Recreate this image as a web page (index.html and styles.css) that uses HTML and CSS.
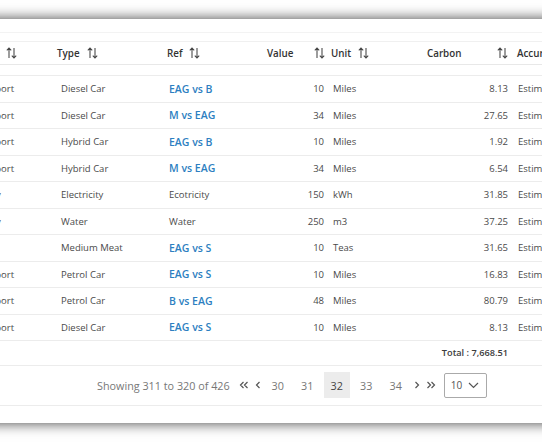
FILE: index.html
```html
<!DOCTYPE html>
<html>
<head>
<meta charset="utf-8">
<link rel="stylesheet" href="styles.css">
</head>
<body>
<div class="panel">
  <div class="toolbar"></div>
  <div class="gap"></div>
  <div class="grid head">
    <div class="hc h1"><span>Scope</span><svg class="sort" viewBox="0 0 11 12"><path d="M3 11V1M0.8 3.4L3 1L5.2 3.4M8 1V11M5.8 8.6L8 11L10.2 8.6"/></svg></div>
    <div class="hc h2"><span>Type</span><svg class="sort" viewBox="0 0 11 12"><path d="M3 11V1M0.8 3.4L3 1L5.2 3.4M8 1V11M5.8 8.6L8 11L10.2 8.6"/></svg></div>
    <div class="hc h3"><span>Ref</span><svg class="sort" viewBox="0 0 11 12"><path d="M3 11V1M0.8 3.4L3 1L5.2 3.4M8 1V11M5.8 8.6L8 11L10.2 8.6"/></svg></div>
    <div class="hc num h4"><span>Value</span><svg class="sort" viewBox="0 0 11 12"><path d="M3 11V1M0.8 3.4L3 1L5.2 3.4M8 1V11M5.8 8.6L8 11L10.2 8.6"/></svg></div>
    <div class="hc h5"><span>Unit</span><svg class="sort" viewBox="0 0 11 12"><path d="M3 11V1M0.8 3.4L3 1L5.2 3.4M8 1V11M5.8 8.6L8 11L10.2 8.6"/></svg></div>
    <div class="hc num h6"><span>Carbon</span><svg class="sort" viewBox="0 0 11 12"><path d="M3 11V1M0.8 3.4L3 1L5.2 3.4M8 1V11M5.8 8.6L8 11L10.2 8.6"/></svg></div>
    <div class="hc h7"><span>Accuracy</span></div>
  </div>
  <div class="spacer"></div>

  <div class="grid row"><div class="c d1">Transport</div><div class="c d2">Diesel Car</div><div class="c d3"><a>EAG vs B</a></div><div class="c n">10</div><div class="c d5">Miles</div><div class="c n">8.13</div><div class="c d7">Estimated</div></div>
  <div class="grid row"><div class="c d1">Transport</div><div class="c d2">Diesel Car</div><div class="c d3"><a>M vs EAG</a></div><div class="c n">34</div><div class="c d5">Miles</div><div class="c n">27.65</div><div class="c d7">Estimated</div></div>
  <div class="grid row"><div class="c d1">Transport</div><div class="c d2">Hybrid Car</div><div class="c d3"><a>EAG vs B</a></div><div class="c n">10</div><div class="c d5">Miles</div><div class="c n">1.92</div><div class="c d7">Estimated</div></div>
  <div class="grid row"><div class="c d1">Transport</div><div class="c d2">Hybrid Car</div><div class="c d3"><a>M vs EAG</a></div><div class="c n">34</div><div class="c d5">Miles</div><div class="c n">6.54</div><div class="c d7">Estimated</div></div>
  <div class="grid row"><div class="c d1">Energy</div><div class="c d2">Electricity</div><div class="c d3">Ecotricity</div><div class="c n">150</div><div class="c d5">kWh</div><div class="c n">31.85</div><div class="c d7">Estimated</div></div>
  <div class="grid row"><div class="c d1">Energy</div><div class="c d2">Water</div><div class="c d3">Water</div><div class="c n">250</div><div class="c d5">m3</div><div class="c n">37.25</div><div class="c d7">Estimated</div></div>
  <div class="grid row"><div class="c d1">Food</div><div class="c d2">Medium Meat</div><div class="c d3"><a>EAG vs S</a></div><div class="c n">10</div><div class="c d5">Teas</div><div class="c n">31.65</div><div class="c d7">Estimated</div></div>
  <div class="grid row"><div class="c d1">Transport</div><div class="c d2">Petrol Car</div><div class="c d3"><a>EAG vs S</a></div><div class="c n">10</div><div class="c d5">Miles</div><div class="c n">16.83</div><div class="c d7">Estimated</div></div>
  <div class="grid row"><div class="c d1">Transport</div><div class="c d2">Petrol Car</div><div class="c d3"><a>B vs EAG</a></div><div class="c n">48</div><div class="c d5">Miles</div><div class="c n">80.79</div><div class="c d7">Estimated</div></div>
  <div class="grid row"><div class="c d1">Transport</div><div class="c d2">Diesel Car</div><div class="c d3"><a>EAG vs S</a></div><div class="c n">10</div><div class="c d5">Miles</div><div class="c n">8.13</div><div class="c d7">Estimated</div></div>

  <div class="grid total"><div class="c totcell">Total : 7,668.51</div></div>

  <div class="pager">
    <span class="showing">Showing 311 to 320 of 426</span>
    <span class="nav first"><svg viewBox="0 0 10 8"><path d="M4.5 1L1.5 4L4.5 7M8.5 1L5.5 4L8.5 7"/></svg></span>
    <span class="nav prev"><svg viewBox="0 0 6 8"><path d="M4.5 1L1.5 4L4.5 7"/></svg></span>
    <span class="pages">
      <span class="pg">30</span>
      <span class="pg">31</span>
      <span class="pg cur">32</span>
      <span class="pg">33</span>
      <span class="pg">34</span>
    </span>
    <span class="nav next"><svg viewBox="0 0 6 8"><path d="M1.5 1L4.5 4L1.5 7"/></svg></span>
    <span class="nav last"><svg viewBox="0 0 10 8"><path d="M1.5 1L4.5 4L1.5 7M5.5 1L8.5 4L5.5 7"/></svg></span>
    <span class="select">10<svg viewBox="0 0 11 7"><path d="M1 1L5.5 5.5L10 1"/></svg></span>
  </div>
</div>
</body>
</html>
```

FILE: styles.css
```css
html, body {
  margin: 0;
  padding: 0;
  overflow: hidden;
  background: #fff;
}
body {
  padding-top: 19px;
  font-family: "Open Sans", "Noto Sans", sans-serif;
  font-size: 9.5px;
  color: #4a4a4a;
  width: 542px;
  height: 442px;
  box-sizing: border-box;
}
.panel {
  margin: 0 -40px;
  padding: 0 40px;
  height: 404px;
  background: #fff;
  box-shadow: 0 0 13px rgba(0, 0, 0, 0.75);
  overflow: hidden;
  box-sizing: border-box;
}
.toolbar {
  height: 13px;
  border-bottom: 1px solid #f3f3f3;
  margin: 0 -40px;
}
.gap {
  height: 8px;
  border-bottom: 1px solid #f0f0f0;
  margin: 0 -40px;
}
.grid {
  display: grid;
  grid-template-columns: 96px 109px 80px 88px 72px 112px 120px;
  margin-left: -45px;
  width: 677px;
}
.head {
  height: 23px;
  border-bottom: 1px solid #e8e8e8;
  box-sizing: border-box;
  color: #333;
  font-weight: 600;
  font-size: 9.8px;
}
.hc {
  display: flex;
  align-items: center;
  gap: 7px;
  padding-left: 7px;
  white-space: nowrap;
}
.hc.h1 {
  justify-content: flex-end;
  padding-right: 34px;
  gap: 9px;
}
.hc.h2 { padding-left: 6px; }
.hc.h3 { padding-left: 7px; }
.hc.h5 { padding-left: 3px; }
.hc.h7 { padding-left: 5px; }
.hc.num {
  justify-content: space-between;
}
.hc.h4 { padding-left: 27px; padding-right: 3px; }
.hc.h6 { padding-left: 27px; padding-right: 4px; }
.sort {
  width: 11px;
  height: 12px;
  fill: none;
  stroke: #444;
  stroke-width: 1.05;
  flex: none;
}
.spacer {
  height: 10px;
  border-bottom: 1px solid #ececec;
  margin: 0 -40px;
}
.row {
  height: 26.5px;
  border-bottom: 1px solid #ececec;
  box-sizing: border-box;
}
.c {
  display: flex;
  align-items: center;
  padding-left: 9px;
  white-space: nowrap;
  overflow: hidden;
}
.c.d1 { padding-left: 15.5px; }
.c.d2 { padding-left: 10px; }
.c.d3 { padding-left: 9px; }
.c.d5 { padding-left: 5px; }
.c.d7 { padding-left: 6px; }
.c.n {
  justify-content: flex-end;
  padding-left: 0;
  padding-right: 4px;
}
a {
  color: #2d7fc1;
  font-weight: 600;
  font-size: 10.5px;
}
.total {
  height: 24.5px;
  border-bottom: 1px solid #ececec;
  box-sizing: border-box;
  grid-template-columns: 557px;
}
.totcell {
  justify-content: flex-end;
  font-weight: 600;
  font-size: 9.2px;
  color: #3c3c3c;
  padding-right: 4px;
}
.pager {
  height: 40px;
  border-bottom: 1px solid #ececec;
  box-sizing: border-box;
  display: flex;
  align-items: center;
  padding-left: 97px;
  color: #777;
  font-size: 10.8px;
}
.showing {
  margin-right: 9px;
}
.nav {
  display: flex;
  align-items: center;
}
.nav svg {
  height: 8px;
  fill: none;
  stroke: #555;
  stroke-width: 1.2;
}
.first svg, .last svg { width: 10px; }
.prev svg, .next svg { width: 6px; }
.prev { margin-left: 6px; }
.pages {
  display: flex;
  gap: 3.5px;
  margin-left: 4px;
}
.next { margin-left: 5.5px; }
.last { margin-left: 6px; }
.pg {
  width: 26px;
  height: 26px;
  display: flex;
  align-items: center;
  justify-content: center;
}
.pg.cur {
  background: #ececec;
  color: #444;
}
.select {
  margin-left: 7.5px;
  width: 43px;
  height: 25px;
  border: 1px solid #aaa;
  border-radius: 2px;
  box-sizing: border-box;
  display: flex;
  align-items: center;
  justify-content: space-between;
  padding: 0 7px 0 6px;
  color: #555;
  font-size: 10px;
}
.select svg {
  width: 11px;
  height: 7px;
  fill: none;
  stroke: #555;
  stroke-width: 1.2;
}
```
